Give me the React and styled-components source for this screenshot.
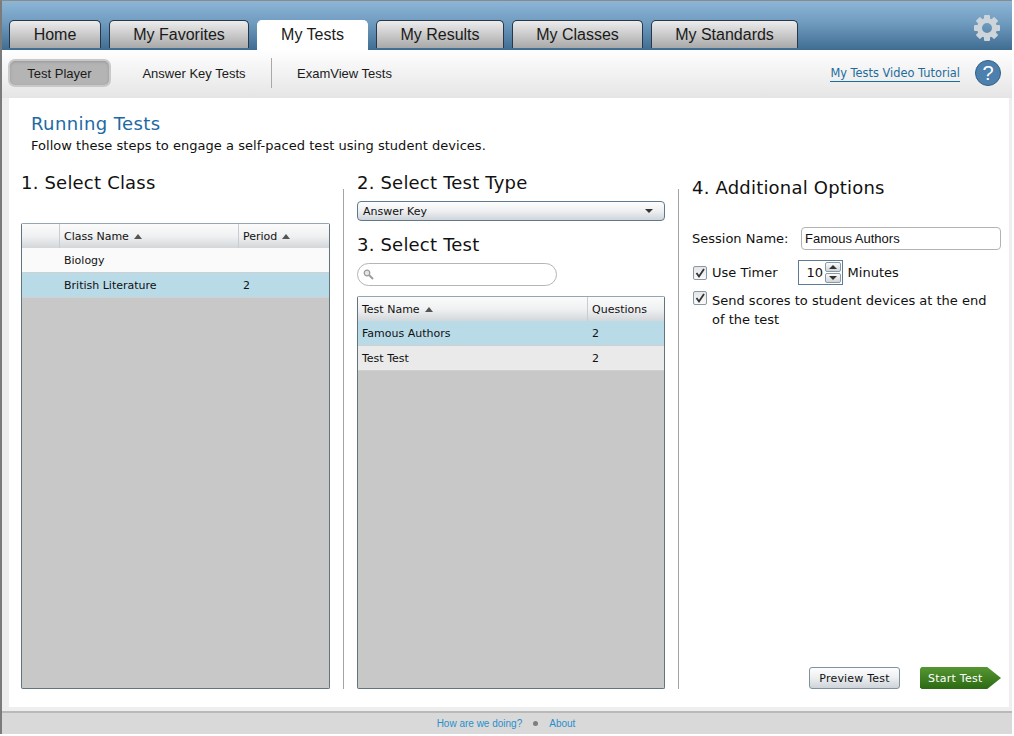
import React from "react";
import styled, { createGlobalStyle } from "styled-components";

const GlobalStyle = createGlobalStyle`
  html, body {
    margin: 0;
    padding: 0;
    background: #fff;
  }
  * {
    box-sizing: border-box;
  }
`;

const Shell = styled.div`
  width: 1012px;
  height: 734px;
  display: flex;
  flex-direction: column;
  border-top: 1px solid #8a8a8a;
  border-left: 2px solid #7b7b7b;
  font-family: "DejaVu Sans", sans-serif;
  color: #111;
  overflow: hidden;
`;

const Header = styled.header`
  height: 49px;
  flex: none;
  display: flex;
  align-items: flex-end;
  gap: 8px;
  padding: 0 11px 0 7px;
  background: linear-gradient(#8db6d6, #6f9bbf 45%, #3f6c91);
`;

const Tab = styled.div`
  width: ${(p) => p.$w}px;
  height: ${(p) => (p.$active ? 30 : 28)}px;
  margin-bottom: ${(p) => (p.$active ? 0 : 2)}px;
  display: flex;
  align-items: center;
  justify-content: center;
  padding-bottom: ${(p) => (p.$active ? 2 : 0)}px;
  border-radius: 5px 5px 0 0;
  border: 1px solid ${(p) => (p.$active ? "#fff" : "#26384a")};
  border-bottom: none;
  background: ${(p) => (p.$active ? "#fff" : "linear-gradient(#ececec, #a9a9a9)")};
  font-family: "Liberation Sans", sans-serif;
  font-size: 16px;
  color: #1a1a1a;
`;

const Gear = styled.svg`
  margin-left: auto;
  align-self: flex-start;
  margin-top: 13px;
`;

const SubNav = styled.nav`
  height: 48px;
  flex: none;
  display: flex;
  align-items: center;
  padding: 0 11px 2px 6px;
  background: linear-gradient(#fff, #f8f8f8 25%, #e5e5e5);
  font-family: "Liberation Sans", sans-serif;
  font-size: 13px;
  color: #1a1a1a;
`;

const SubButton = styled.div`
  width: ${(p) => p.$w}px;
  height: 28px;
  display: flex;
  align-items: center;
  justify-content: center;
  padding-left: ${(p) => p.$inset || 0}px;
  border-radius: 7px;
  ${(p) =>
    p.$active &&
    `
    background: #b4b4b4;
    border: 2px solid #c9c9c9;
    box-shadow: inset 0 1px 3px #989898;
  `}
`;

const SubDivider = styled.div`
  width: 1px;
  height: 30px;
  background: #a9a9a9;
`;

const TutorialLink = styled.a`
  margin-left: auto;
  margin-top: 1px;
  font-family: "DejaVu Sans", sans-serif;
  font-size: 11.4px;
  line-height: 15px;
  color: #1c6d9c;
  border-bottom: 1px solid #1c6d9c;
`;

const Help = styled.div`
  width: 26px;
  height: 26px;
  margin-left: 15px;
  display: flex;
  align-items: center;
  justify-content: center;
  border-radius: 50%;
  background: #4d80ad;
  border: 1px solid #2f6088;
  color: #fff;
  font-family: "Liberation Sans", sans-serif;
  font-size: 20px;
`;

const Stage = styled.div`
  flex: 1;
  display: flex;
  padding: 0 3px 4px 7px;
  background: #eeeeee;
`;

const Panel = styled.main`
  flex: 1;
  display: flex;
  flex-direction: column;
  padding: 15px 8px 18px 12px;
  background: #fff;
`;

const Intro = styled.div`
  padding-left: 10px;
  height: 59px;
`;

const PageTitle = styled.h1`
  margin: 0;
  font-size: 18px;
  line-height: 21px;
  letter-spacing: 0.4px;
  font-weight: normal;
  color: #1d69a4;
`;

const PageText = styled.p`
  margin: 4px 0 0;
  font-size: 13px;
  line-height: 16px;
  letter-spacing: 0.03px;
`;

const Columns = styled.div`
  flex: 1;
  display: flex;
  min-height: 0;
`;

const Column = styled.section`
  width: ${(p) => p.$w}px;
  flex: none;
  display: flex;
  flex-direction: column;
`;

const Divider = styled.div`
  width: 1px;
  flex: none;
  margin: 17px ${(p) => p.$right}px 0 13px;
  background: #a4a4a4;
`;

const StepTitle = styled.h2`
  margin: ${(p) => p.$top || 0}px 0 ${(p) => p.$bottom || 0}px;
  font-size: 18px;
  line-height: 22px;
  letter-spacing: 0.2px;
  font-weight: normal;
  color: #111;
`;

const Table = styled.div`
  flex: 1;
  min-height: 0;
  display: flex;
  flex-direction: column;
  background: #c8c8c8;
  border: 1px solid #62757f;
  border-top-color: #93a6b2;
  border-radius: 2px;
  font-size: 11px;
`;

const TableRow = styled.div`
  display: grid;
  grid-template-columns: ${(p) => p.$cols};
  height: ${(p) => p.$h || 25}px;
  flex: none;
  align-items: center;
  background: ${(p) => p.$bg || "#fafafa"};
  border-bottom: 1px solid ${(p) => p.$line || "#d0d0d0"};
`;

const HeadRow = styled(TableRow)`
  height: 24px;
  align-items: stretch;
  background: linear-gradient(#fbfbfb, #f0f1f2 50%, #d3d7da);
  border-bottom: none;
`;

const HeadCell = styled.div`
  display: flex;
  align-items: center;
  gap: 5px;
  padding-left: 4px;
  border-right: 1px solid ${(p) => (p.$last ? "transparent" : "#c7cdd1")};
`;

const Cell = styled.div`
  padding-left: 4px;
`;

const SortArrow = styled.span`
  width: 0;
  height: 0;
  border-left: 4px solid transparent;
  border-right: 4px solid transparent;
  border-bottom: 5px solid #555;
`;

const Select = styled.div`
  height: 20px;
  flex: none;
  display: flex;
  align-items: center;
  justify-content: space-between;
  padding: 0 11px 0 5px;
  margin-top: 7px;
  border: 1px solid #5f7a8e;
  border-radius: 4px;
  background: linear-gradient(#fdfdfd, #eef0f2 50%, #cfd5da);
  font-size: 11px;
`;

const DownArrow = styled.span`
  width: 0;
  height: 0;
  border-left: 4px solid transparent;
  border-right: 4px solid transparent;
  border-top: 4px solid #333;
`;

const SearchBox = styled.div`
  width: 200px;
  height: 23px;
  flex: none;
  display: flex;
  align-items: center;
  padding-left: 5px;
  margin-bottom: 10px;
  border: 1px solid #b5b5b5;
  border-radius: 12px;
  background: #fff;
`;

const FormRow = styled.div`
  display: flex;
  align-items: ${(p) => p.$align || "center"};
  margin-top: ${(p) => p.$top || 0}px;
  font-size: 13px;
`;

const SessionInput = styled.input`
  width: 200px;
  height: 23px;
  margin-left: auto;
  padding: 0 3px;
  border: 1px solid #b3b3b3;
  border-radius: 4px;
  background: #fff;
  font-family: "Liberation Sans", sans-serif;
  font-size: 13px;
  color: #111;
  outline: none;
`;

const Check = styled.span`
  width: 14px;
  height: 14px;
  flex: none;
  display: flex;
  align-items: center;
  justify-content: center;
  margin: 0 5px 0 1px;
  border: 1px solid #8c98a2;
  border-radius: 2px;
  background: linear-gradient(#e3e6e9, #fafafa);
`;

const Spinner = styled.div`
  width: 45px;
  height: 25px;
  margin: 0 5px 0 20px;
  display: flex;
  align-items: center;
  justify-content: space-between;
  padding: 0 1px 0 8px;
  border: 1px solid #5d7b94;
`;

const SpinButtons = styled.div`
  display: flex;
  flex-direction: column;
  gap: 1px;
`;

const SpinButton = styled.div`
  width: 16px;
  height: 10px;
  display: flex;
  align-items: center;
  justify-content: center;
  border: 1px solid #8a9aa6;
  border-radius: 2px;
  background: linear-gradient(#fbfbfb, #d0d5d9);
`;

const SpinUp = styled.span`
  width: 0;
  height: 0;
  border-left: 4px solid transparent;
  border-right: 4px solid transparent;
  border-bottom: 4px solid #333;
`;

const SendText = styled.span`
  line-height: 19px;
`;

const Actions = styled.div`
  margin-top: auto;
  display: flex;
  justify-content: flex-end;
  align-items: center;
  gap: 20px;
`;

const PreviewButton = styled.div`
  width: 91px;
  height: 22px;
  display: flex;
  align-items: center;
  justify-content: center;
  border: 1px solid #7f929e;
  border-radius: 3px;
  background: linear-gradient(#fdfdfd, #eceef0 50%, #cdd3d8);
  font-size: 11px;
  letter-spacing: 0.2px;
`;

const StartButton = styled.div`
  width: 81px;
  height: 22px;
  display: flex;
  align-items: center;
  padding-left: 8px;
  clip-path: polygon(0 8%, 2% 0, 83% 0, 100% 50%, 83% 100%, 2% 100%, 0 92%);
  background: linear-gradient(#569632, #2c6a13);
  color: #fff;
  font-size: 11px;
  letter-spacing: 0.25px;
`;

const Footer = styled.footer`
  height: 23px;
  flex: none;
  display: flex;
  align-items: center;
  justify-content: center;
  padding: 0 2px 1px 0;
  border-top: 2px solid #b9b9b9;
  background: #d9d9d9;
  font-family: "Liberation Sans", sans-serif;
  font-size: 10px;
  color: #2a8fc9;
`;

const FooterDot = styled.span`
  width: 5px;
  height: 5px;
  margin: 0 11px;
  border-radius: 50%;
  background: #7e7e7e;
`;

const tabs = [
  { label: "Home", w: 92 },
  { label: "My Favorites", w: 140 },
  { label: "My Tests", w: 111, active: true },
  { label: "My Results", w: 128 },
  { label: "My Classes", w: 131 },
  { label: "My Standards", w: 147 },
];

const classCols = "38px 179px 1fr";
const testCols = "230px 1fr";

function GearIcon() {
  const teeth = [0, 45, 90, 135, 180, 225, 270, 315];
  return (
    <Gear width="28" height="28" viewBox="0 0 28 28">
      {teeth.map((a) => (
        <rect key={a} x="11" y="1" width="6" height="6" rx="1" fill="#cdd5db" transform={`rotate(${a} 14 14)`} />
      ))}
      <circle cx="14" cy="14" r="7.5" fill="none" stroke="#cdd5db" strokeWidth="5" />
    </Gear>
  );
}

function CheckMark() {
  return (
    <svg width="12" height="12" viewBox="0 0 12 12">
      <path d="M2.5 6 L5 9.5 L10 2" fill="none" stroke="#333" strokeWidth="1.8" />
    </svg>
  );
}

function SearchIcon() {
  return (
    <svg width="11" height="11" viewBox="0 0 11 11">
      <circle cx="4" cy="4" r="2.8" fill="#e4e4e4" stroke="#9a9a9a" strokeWidth="1.2" />
      <path d="M6 6 L10 10" stroke="#9a9a9a" strokeWidth="1.8" />
    </svg>
  );
}

export default function App() {
  return (
    <>
      <GlobalStyle />
      <Shell>
        <Header>
          {tabs.map((t) => (
            <Tab key={t.label} $w={t.w} $active={t.active}>
              {t.label}
            </Tab>
          ))}
          <GearIcon />
        </Header>

        <SubNav>
          <SubButton $w={103} $active>Test Player</SubButton>
          <SubButton $w={160} $inset={6}>Answer Key Tests</SubButton>
          <SubDivider />
          <SubButton $w={145}>ExamView Tests</SubButton>
          <TutorialLink>My Tests Video Tutorial</TutorialLink>
          <Help>?</Help>
        </SubNav>

        <Stage>
          <Panel>
            <Intro>
              <PageTitle>Running Tests</PageTitle>
              <PageText>Follow these steps to engage a self-paced test using student devices.</PageText>
            </Intro>

            <Columns>
              <Column $w={309}>
                <StepTitle $bottom={29}>1. Select Class</StepTitle>
                <Table>
                  <HeadRow $cols={classCols}>
                    <HeadCell />
                    <HeadCell>Class Name <SortArrow /></HeadCell>
                    <HeadCell $last>Period <SortArrow /></HeadCell>
                  </HeadRow>
                  <TableRow $cols={classCols}>
                    <span />
                    <Cell>Biology</Cell>
                    <span />
                  </TableRow>
                  <TableRow $cols={classCols} $bg="#b9dbe8">
                    <span />
                    <Cell>British Literature</Cell>
                    <Cell>2</Cell>
                  </TableRow>
                </Table>
              </Column>

              <Divider $right={13} />

              <Column $w={308}>
                <StepTitle>2. Select Test Type</StepTitle>
                <Select>
                  Answer Key
                  <DownArrow />
                </Select>
                <StepTitle $top={13} $bottom={7}>3. Select Test</StepTitle>
                <SearchBox>
                  <SearchIcon />
                </SearchBox>
                <Table>
                  <HeadRow $cols={testCols}>
                    <HeadCell>Test Name <SortArrow /></HeadCell>
                    <HeadCell $last>Questions</HeadCell>
                  </HeadRow>
                  <TableRow $cols={testCols} $bg="#b9dbe8">
                    <Cell>Famous Authors</Cell>
                    <Cell>2</Cell>
                  </TableRow>
                  <TableRow $cols={testCols} $bg="#eaeaea">
                    <Cell>Test Test</Cell>
                    <Cell>2</Cell>
                  </TableRow>
                </Table>
              </Column>

              <Divider $right={13} />

              <Column $w={309}>
                <StepTitle $top={5} $bottom={28}>4. Additional Options</StepTitle>
                <FormRow>
                  Session Name:
                  <SessionInput defaultValue="Famous Authors" readOnly />
                </FormRow>
                <FormRow $top={10}>
                  <Check><CheckMark /></Check>
                  Use Timer
                  <Spinner>
                    10
                    <SpinButtons>
                      <SpinButton><SpinUp /></SpinButton>
                      <SpinButton><DownArrow /></SpinButton>
                    </SpinButtons>
                  </Spinner>
                  Minutes
                </FormRow>
                <FormRow $align="flex-start" $top={6}>
                  <Check><CheckMark /></Check>
                  <SendText>Send scores to student devices at the end of the test</SendText>
                </FormRow>
                <Actions>
                  <PreviewButton>Preview Test</PreviewButton>
                  <StartButton>Start Test</StartButton>
                </Actions>
              </Column>
            </Columns>
          </Panel>
        </Stage>

        <Footer>
          How are we doing?
          <FooterDot />
          About
        </Footer>
      </Shell>
    </>
  );
}
